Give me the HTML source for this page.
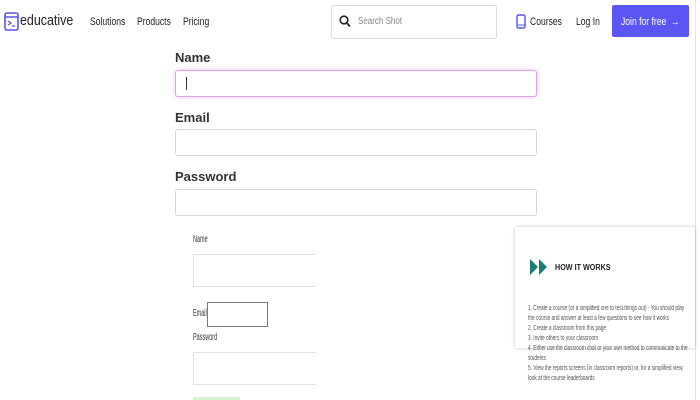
<!DOCTYPE html>
<html><head><style>
*{margin:0;padding:0;box-sizing:border-box}
body{width:700px;height:400px;overflow:hidden;background:#fff;font-family:"Liberation Sans",sans-serif;position:relative;color:#222}
.a{position:absolute}
.nav{font-size:11px;color:#222;top:16px;transform:scaleX(.78);transform-origin:left;white-space:nowrap}
.lbl{font-size:13px;font-weight:bold;color:#333;left:175px}
.inp{left:175px;width:362px;height:27px;border:1px solid #d6d6d6;border-radius:3px;background:#fff}
.sm{font-size:10px;color:#333;transform:scaleX(.55);transform-origin:left}
.li{font-size:7px;color:#555;line-height:10px;left:528px;width:240px;transform:scaleX(.68);transform-origin:left top}
</style></head><body>
<svg class="a" style="left:4px;top:12px" width="15" height="19" viewBox="0 0 15 19"><rect x="1" y="1" width="13" height="17" rx="2" fill="none" stroke="#5553e8" stroke-width="1.6"/><line x1="1" y1="5" x2="14" y2="5" stroke="#5553e8" stroke-width="1.5"/><path d="M4 9l3 2-3 2M8 14h3" stroke="#5553e8" stroke-width="1.3" fill="none"/></svg>
<div class="a" style="left:20px;top:12px;font-size:15px;color:#222;transform:scaleX(.83);transform-origin:left">educative</div>
<div class="a nav" style="left:90px">Solutions</div>
<div class="a nav" style="left:137px">Products</div>
<div class="a nav" style="left:183px">Pricing</div>
<div class="a" style="left:331px;top:5px;width:166px;height:34px;border:1px solid #ddd;border-radius:2px"></div>
<svg class="a" style="left:339px;top:15px" width="12" height="13" viewBox="0 0 12 13"><circle cx="5" cy="5" r="3.8" fill="none" stroke="#222" stroke-width="1.6"/><line x1="7.8" y1="8" x2="11" y2="11.5" stroke="#222" stroke-width="1.8"/></svg>
<div class="a" style="left:358px;top:16px;font-size:10px;color:#888;transform:scaleX(.8);transform-origin:left">Search Shot</div>
<svg class="a" style="left:516px;top:14px" width="10" height="15" viewBox="0 0 10 15"><rect x="1" y="1" width="8" height="13" rx="1.5" fill="none" stroke="#5553e8" stroke-width="1.4"/><line x1="1" y1="11" x2="9" y2="11" stroke="#5553e8"/></svg>
<div class="a nav" style="left:530px">Courses</div>
<div class="a nav" style="left:576px">Log In</div>
<div class="a" style="left:612px;top:5px;width:77px;height:32px;background:#5a55f3;border-radius:2px"></div>
<div class="a nav" style="left:621px;color:#fff">Join for free &nbsp;→</div>
<div class="a" style="left:695px;top:0;width:1px;height:400px;background:#e4e4e4"></div>

<div class="a lbl" style="top:50px">Name</div>
<div class="a inp" style="top:70px;border-color:#d9a6e6;box-shadow:0 0 4px #eebcf5"></div>
<div class="a" style="left:186px;top:77px;width:1px;height:13px;background:#333"></div>
<div class="a lbl" style="top:110px">Email</div>
<div class="a inp" style="top:129px"></div>
<div class="a lbl" style="top:169px">Password</div>
<div class="a inp" style="top:189px"></div>

<div class="a sm" style="left:193px;top:234px">Name</div>
<div class="a" style="left:193px;top:254px;width:123px;height:33px;border:1px solid #e2e2e2;border-right:none"></div>
<div class="a sm" style="left:193px;top:308px">Email</div>
<div class="a" style="left:207px;top:302px;width:61px;height:25px;border:1px solid #777"></div>
<div class="a sm" style="left:193px;top:332px">Password</div>
<div class="a" style="left:193px;top:352px;width:123px;height:33px;border:1px solid #e2e2e2;border-right:none"></div>
<div class="a" style="left:193px;top:397px;width:47px;height:3px;background:#d6f5d0"></div>

<div class="a" style="left:515px;top:227px;width:180px;height:121px;background:#fff;box-shadow:0 0 3px rgba(0,0,0,.25)"></div>
<svg class="a" style="left:530px;top:259px" width="18" height="16" viewBox="0 0 18 16"><path d="M0 0l8 8-8 8zM9 0l8 8-8 8z" fill="#1a7d78"/></svg>
<div class="a" style="left:555px;top:263px;font-size:8px;font-weight:bold;color:#222;transform:scaleX(.9);transform-origin:left">HOW IT WORKS</div>
<div class="a li" style="top:304px">1. Create a course (or a simplified one to test things out) - You should play the course and answer at least a few questions to see how it works<br>2. Create a classroom from this page<br>3. Invite others to your classroom<br>4. Either use the classroom chat or your own method to communicate to the students<br>5. View the reports screens (in classroom reports) or, for a simplified view, look at the course leaderboards</div>
</body></html>
